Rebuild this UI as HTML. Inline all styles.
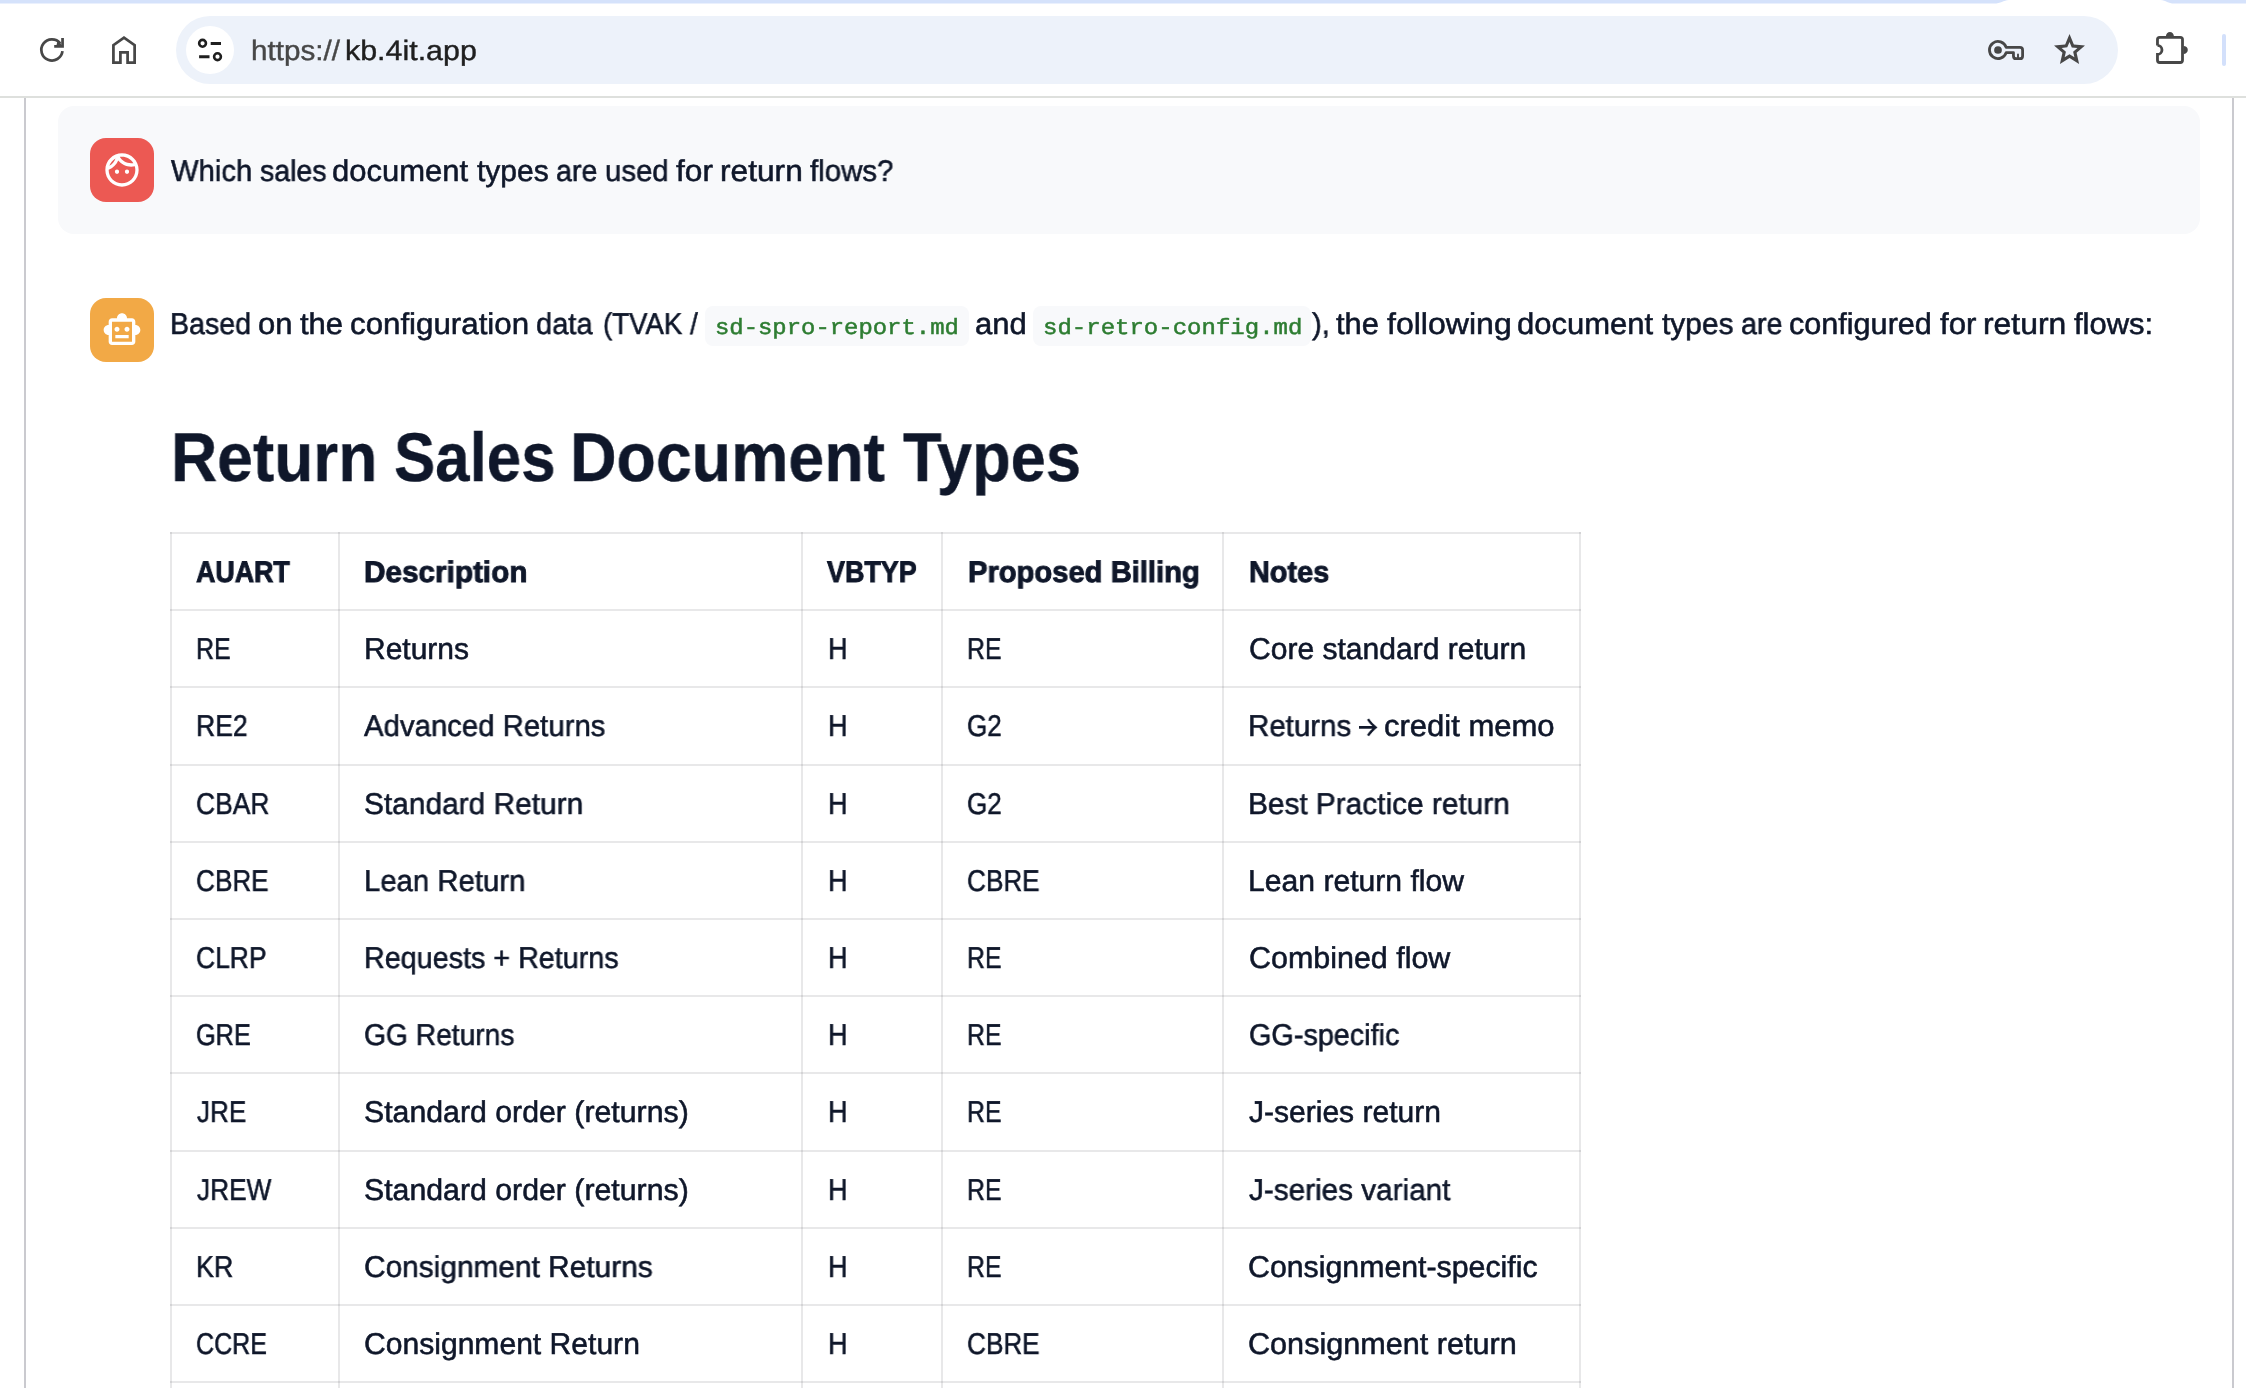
<!DOCTYPE html>
<html lang="en"><head><meta charset="utf-8"><title>kb.4it.app</title>
<style>
html,body{margin:0;padding:0;background:#fff}
body{position:relative;width:2246px;height:1388px;overflow:hidden;font-family:"Liberation Sans",sans-serif;color:#0f172a}
.a,.t,svg.i{position:absolute}
.t{white-space:nowrap;line-height:1;transform-origin:0 0;will-change:transform;text-rendering:geometricPrecision}
.t{-webkit-text-stroke:.55px currentColor}
.b{-webkit-text-stroke:.9px currentColor}
.h{-webkit-text-stroke:.4px currentColor}
.url{-webkit-text-stroke:.4px currentColor}
.code{-webkit-text-stroke:.5px currentColor}
.arrow{-webkit-text-stroke:0;display:block}
h1,p{margin:0;padding:0;font-size:inherit;font-weight:inherit}
.strip{left:0;top:0;width:2246px;height:5px}
.omni{left:176px;top:16px;width:1942px;height:68px;border-radius:34px;background:#edf2fa}
.site{left:186px;top:26px;width:48px;height:48px;border-radius:24px;background:#fff}
.tbline{left:0;top:96px;width:2246px;height:2px;background:#dee0dd}
.pill{left:2222px;top:34px;width:4px;height:32px;border-radius:2px;background:#d3e0fb}
.vline{top:98px;width:2px;height:1290px;background:#cacacf}
.ubox{left:58px;top:106px;width:2142px;height:128px;border-radius:16px;background:#f8f9fb}
.av{left:90px;width:64px;height:64px;border-radius:16px}
.av svg{position:absolute;left:12px;top:12px;width:40px;height:40px;fill:#fff}
.chip{top:306px;height:40px;border-radius:8px;background:#f8f9fb}
.gl{background:rgba(49,51,63,.115)}
</style></head>
<body>
<header>
<svg class="i strip" viewBox="0 0 2246 5"><path fill="#d5e2fb" d="M0 0H2009C2003 0.4 2001 3.6 1994 3.6H0ZM2160.5 0C2166.5 0.4 2167.5 3.6 2174.5 3.6H2246V0Z"/></svg>

<svg class="i" style="left:34px;top:30px;width:110px;height:40px" viewBox="34 30 110 40"><g fill="none" stroke="#474747" stroke-width="2.74" stroke-miterlimit="10"><path d="M60.2 43.3A10.6 10.6 0 1 0 62.47 51.2"/><path d="M54.2 46.35H62.55V38"/><path d="M113.42 62.55V45.2L124 37.68L134.63 45.2V62.55H127.6V52.4H120.4V62.55Z"/></g><path fill="#474747" d="M57.6 40.6L61.2 43.9V45.2H56.5Z"/></svg>

<div class="a omni"></div><div class="a site"></div>
<svg class="i" style="left:186px;top:26px;width:48px;height:48px" viewBox="186 26 48 48"><g fill="none" stroke="#1f1f1f" stroke-width="2.6"><circle cx="202.55" cy="43.3" r="3.4"/><circle cx="217.5" cy="56.7" r="3.4"/></g><g stroke="#1f1f1f" stroke-width="3"><path d="M210.7 43.5H221M199.1 56.7H209.5"/></g></svg>
<div class="addr"><span class="t url" style="left:250.54px;top:37.02px;font-size:28.0px;transform:scaleX(1.0590);color:#474747">https://</span>
<span class="t url" style="left:344.61px;top:37.02px;font-size:28.0px;transform:scaleX(1.0858);color:#1f1f1f">kb.4it.app</span></div>
<svg class="i" style="left:1984px;top:34px;width:46px;height:32px" viewBox="1984 34 46 32"><path fill="none" stroke="#474747" stroke-width="2.8" stroke-linejoin="round" d="M2006.16 47.45A8.55 8.55 0 1 0 2006.16 52.55H2013.45V55.9Q2013.45 58.67 2016.2 58.67H2019.85Q2022.6 58.67 2022.6 55.9V50.2Q2022.6 47.45 2019.85 47.45Z"/><circle cx="1998" cy="50" r="3.86" fill="#474747"/><path stroke="#474747" stroke-width="1.9" stroke-linecap="round" d="M2018 54.5V57.6"/></svg>
<svg class="i" style="left:2054.3px;top:33.9px;width:31.05px;height:29.9px" viewBox="2 3 20 19" preserveAspectRatio="none"><path fill="#474747" d="m8.85 17.825 3.15-1.9 3.15 1.925-.825-3.6 2.775-2.4-3.65-.325-1.45-3.4-1.45 3.375-3.65.325 2.775 2.425ZM5.825 22l1.625-7.025L2 10.25l7.2-.625L12 3l2.8 6.625 7.2.625-5.45 4.725L18.175 22 12 18.275Z"/></svg>
<svg class="i" style="left:2150px;top:28px;width:44px;height:40px" viewBox="2150 28 44 40"><path fill="none" stroke="#474747" stroke-width="2.8" d="M2157.47 45.4V39.5Q2157.47 37.3 2159.67 37.3H2180.3Q2182.5 37.3 2182.5 39.5V60.3Q2182.5 62.5 2180.3 62.5H2159.67Q2157.47 62.5 2157.47 60.3V54.4A4.5 4.5 0 0 0 2157.47 45.4"/><path fill="#474747" d="M2165.9 36.3A4 4.3 0 0 1 2173.9 36.3ZM2183.5 45.9A4.3 4 0 0 1 2183.5 53.9Z"/></svg>
<div class="a pill"></div>
<div class="a tbline"></div>
</header>
<main>
<div class="a vline" style="left:24px"></div><div class="a vline" style="left:2232px"></div>
<section class="msg user">
<div class="a ubox"></div>
<div class="a av" style="top:138px;background:#ec5953"><svg viewBox="0 0 24 24"><path d="M10.25 13c0 .69-.56 1.250-1.250 1.250S7.750 13.690 7.750 13s.56-1.250 1.250-1.250 1.250.56 1.250 1.250zM15 11.750c-.69 0-1.250.56-1.250 1.250s.56 1.250 1.250 1.250 1.250-.56 1.250-1.250-.56-1.250-1.250-1.250zm7 .25c0 5.520-4.480 10-10 10S2 17.520 2 12 6.480 2 12 2s10 4.480 10 10zM10.660 4.120C12.060 6.440 14.600 8 17.500 8c.46 0 .91-.05 1.340-.12C17.440 5.560 14.900 4 12 4c-.46 0-.91.05-1.340.12zM4.420 9.470c1.710-.97 3.030-2.550 3.660-4.440C6.370 6 5.050 7.580 4.420 9.470zM20 12c0-.78-.12-1.530-.33-2.240-.7.15-1.420.24-2.170.24-3.130 0-5.920-1.440-7.760-3.690C8.690 8.870 6.600 10.880 4 11.860c.1.040 0 .09 0 .14 0 4.410 3.590 8 8 8s8-3.590 8-8z"/></svg></div>
<p><span class="t" style="left:170.90px;top:157.02px;font-size:30.0px;transform:scaleX(0.9744)">Which</span>
<span class="t" style="left:259.70px;top:157.02px;font-size:30.0px;transform:scaleX(0.9507)">sales</span>
<span class="t" style="left:332.27px;top:157.02px;font-size:30.0px;transform:scaleX(1.0328)">document</span>
<span class="t" style="left:477.00px;top:157.02px;font-size:30.0px;transform:scaleX(1.0000)">types</span>
<span class="t" style="left:556.35px;top:157.02px;font-size:30.0px;transform:scaleX(0.9524)">are</span>
<span class="t" style="left:605.32px;top:157.02px;font-size:30.0px;transform:scaleX(0.9790)">used</span>
<span class="t" style="left:676.20px;top:157.02px;font-size:30.0px;transform:scaleX(1.0543)">for</span>
<span class="t" style="left:719.59px;top:157.02px;font-size:30.0px;transform:scaleX(1.0560)">return</span>
<span class="t" style="left:809.80px;top:157.02px;font-size:30.0px;transform:scaleX(0.9821)">flows?</span></p>
</section>
<section class="msg bot">
<div class="a av" style="top:298px;background:#f2a946"><svg viewBox="0 0 24 24"><path d="M20 9V7c0-1.100-.9-2-2-2h-3c0-1.660-1.340-3-3-3S9 3.340 9 5H6c-1.100 0-2 .9-2 2v2c-1.660 0-3 1.340-3 3s1.340 3 3 3v4c0 1.100.9 2 2 2h12c1.100 0 2-.9 2-2v-4c1.660 0 3-1.340 3-3s-1.340-3-3-3zm-2 10H6V7h12v12zm-9-6c-.83 0-1.500-.67-1.500-1.500S8.170 10 9 10s1.500.67 1.500 1.500S9.830 13 9 13zm7.500-1.500c0 .83-.67 1.500-1.500 1.500s-1.500-.67-1.500-1.500.67-1.500 1.500-1.500 1.500.67 1.500 1.500zM8 15h8v2H8v-2z"/></svg></div>
<div class="a chip" style="left:705px;width:264px"></div><div class="a chip" style="left:1032.7px;width:278.4px"></div>
<p><span class="t" style="left:170.20px;top:310.02px;font-size:30.0px;transform:scaleX(0.9512)">Based</span>
<span class="t" style="left:258.37px;top:310.02px;font-size:30.0px;transform:scaleX(1.0323)">on</span>
<span class="t" style="left:299.80px;top:310.02px;font-size:30.0px;transform:scaleX(1.0341)">the</span>
<span class="t" style="left:350.06px;top:310.02px;font-size:30.0px;transform:scaleX(1.0426)">configuration</span>
<span class="t" style="left:535.93px;top:310.02px;font-size:30.0px;transform:scaleX(0.9690)">data</span>
<span class="t" style="left:603.08px;top:310.02px;font-size:30.0px;transform:scaleX(0.9216)">(TVAK /</span>
<span class="t code" style="left:714.92px;top:318.02px;font-size:22.2px;transform:scaleX(1.0772);font-family:'Liberation Mono', monospace;color:#2e7d32">sd-spro-report.md</span>
<span class="t" style="left:974.97px;top:310.02px;font-size:30.0px;transform:scaleX(1.0340)">and</span>
<span class="t code" style="left:1042.82px;top:318.02px;font-size:22.2px;transform:scaleX(1.0823);font-family:'Liberation Mono', monospace;color:#2e7d32">sd-retro-config.md</span>
<span class="t" style="left:1312.20px;top:310.02px;font-size:30.0px;transform:scaleX(0.9750)">),</span>
<span class="t" style="left:1335.80px;top:310.02px;font-size:30.0px;transform:scaleX(1.0293)">the</span>
<span class="t" style="left:1386.90px;top:310.02px;font-size:30.0px;transform:scaleX(1.0687)">following</span>
<span class="t" style="left:1516.77px;top:310.02px;font-size:30.0px;transform:scaleX(1.0336)">document</span>
<span class="t" style="left:1662.00px;top:310.02px;font-size:30.0px;transform:scaleX(0.9972)">types</span>
<span class="t" style="left:1740.75px;top:310.02px;font-size:30.0px;transform:scaleX(0.9548)">are</span>
<span class="t" style="left:1789.28px;top:310.02px;font-size:30.0px;transform:scaleX(1.0196)">configured</span>
<span class="t" style="left:1940.30px;top:310.02px;font-size:30.0px;transform:scaleX(1.0400)">for</span>
<span class="t" style="left:1983.27px;top:310.02px;font-size:30.0px;transform:scaleX(1.0627)">return</span>
<span class="t" style="left:2073.90px;top:310.02px;font-size:30.0px;transform:scaleX(1.0324)">flows:</span></p>
<h1><span class="t h" style="left:171.49px;top:423.02px;font-size:69.0px;transform:scaleX(0.9279);font-weight:700">Return</span>
<span class="t h" style="left:393.91px;top:423.02px;font-size:69.0px;transform:scaleX(0.8955);font-weight:700">Sales</span>
<span class="t h" style="left:570.06px;top:423.02px;font-size:69.0px;transform:scaleX(0.9339);font-weight:700">Document</span>
<span class="t h" style="left:903.00px;top:423.02px;font-size:69.0px;transform:scaleX(0.9156);font-weight:700">Types</span></h1>
<div class="table">
<div class="a gl" style="left:170px;top:532px;width:2px;height:856px"></div><div class="a gl" style="left:338px;top:532px;width:2px;height:856px"></div><div class="a gl" style="left:801px;top:532px;width:2px;height:856px"></div><div class="a gl" style="left:941px;top:532px;width:2px;height:856px"></div><div class="a gl" style="left:1222px;top:532px;width:2px;height:856px"></div><div class="a gl" style="left:1579px;top:532px;width:2px;height:856px"></div><div class="a gl" style="left:170px;top:532.00px;width:1411px;height:2px"></div><div class="a gl" style="left:170px;top:609.20px;width:1411px;height:2px"></div><div class="a gl" style="left:170px;top:686.40px;width:1411px;height:2px"></div><div class="a gl" style="left:170px;top:763.60px;width:1411px;height:2px"></div><div class="a gl" style="left:170px;top:840.80px;width:1411px;height:2px"></div><div class="a gl" style="left:170px;top:918.00px;width:1411px;height:2px"></div><div class="a gl" style="left:170px;top:995.20px;width:1411px;height:2px"></div><div class="a gl" style="left:170px;top:1072.40px;width:1411px;height:2px"></div><div class="a gl" style="left:170px;top:1149.60px;width:1411px;height:2px"></div><div class="a gl" style="left:170px;top:1226.80px;width:1411px;height:2px"></div><div class="a gl" style="left:170px;top:1304.00px;width:1411px;height:2px"></div><div class="a gl" style="left:170px;top:1381.20px;width:1411px;height:2px"></div>
<div class="tr th"><span class="t b" style="left:195.50px;top:558.02px;font-size:29.9px;transform:scaleX(0.8971);font-weight:700">AUART</span>
<span class="t b" style="left:364.01px;top:558.02px;font-size:29.9px;transform:scaleX(0.9938);font-weight:700">Description</span>
<span class="t b" style="left:826.90px;top:558.02px;font-size:29.9px;transform:scaleX(0.9000);font-weight:700">VBTYP</span>
<span class="t b" style="left:967.82px;top:558.02px;font-size:29.9px;transform:scaleX(0.9757);font-weight:700">Proposed Billing</span>
<span class="t b" style="left:1249.03px;top:558.02px;font-size:29.9px;transform:scaleX(0.9654);font-weight:700">Notes</span></div>
<div class="tr"><span class="t" style="left:195.84px;top:635.02px;font-size:30.0px;transform:scaleX(0.8308)">RE</span> <span class="t" style="left:363.70px;top:635.02px;font-size:30.0px;transform:scaleX(0.9980)">Returns</span> <span class="t" style="left:827.90px;top:635.02px;font-size:30.0px;transform:scaleX(0.9000)">H</span> <span class="t" style="left:966.95px;top:635.02px;font-size:30.0px;transform:scaleX(0.8256)">RE</span> <span class="t" style="left:1248.70px;top:635.02px;font-size:30.0px;transform:scaleX(1.0018)">Core standard return</span></div>
<div class="tr"><span class="t" style="left:195.73px;top:712.02px;font-size:30.0px;transform:scaleX(0.8836)">RE2</span> <span class="t" style="left:364.00px;top:712.02px;font-size:30.0px;transform:scaleX(0.9780)">Advanced Returns</span> <span class="t" style="left:827.90px;top:712.02px;font-size:30.0px;transform:scaleX(0.9000)">H</span> <span class="t" style="left:967.23px;top:712.02px;font-size:30.0px;transform:scaleX(0.8684)">G2</span> <span class="t" style="left:1248.43px;top:712.02px;font-size:30.0px;transform:scaleX(0.9833)">Returns</span> <span class="t arrow" style="left:1359.00px;top:707.02px;font-size:38.4px;transform:scaleX(0.867);width:22.1px;overflow:hidden;text-indent:-15.89px;font-family:'Noto Sans CJK SC', 'DejaVu Sans', sans-serif">→</span> <span class="t" style="left:1384.37px;top:712.02px;font-size:30.0px;transform:scaleX(1.0337)">credit memo</span></div>
<div class="tr"><span class="t" style="left:195.82px;top:790.02px;font-size:30.0px;transform:scaleX(0.8802)">CBAR</span> <span class="t" style="left:364.00px;top:790.02px;font-size:30.0px;transform:scaleX(0.9959)">Standard Return</span> <span class="t" style="left:827.90px;top:790.02px;font-size:30.0px;transform:scaleX(0.9000)">H</span> <span class="t" style="left:967.23px;top:790.02px;font-size:30.0px;transform:scaleX(0.8684)">G2</span> <span class="t" style="left:1248.41px;top:790.02px;font-size:30.0px;transform:scaleX(0.9938)">Best Practice return</span></div>
<div class="tr"><span class="t" style="left:195.83px;top:867.02px;font-size:30.0px;transform:scaleX(0.8716)">CBRE</span> <span class="t" style="left:363.75px;top:867.02px;font-size:30.0px;transform:scaleX(0.9772)">Lean Return</span> <span class="t" style="left:827.90px;top:867.02px;font-size:30.0px;transform:scaleX(0.9000)">H</span> <span class="t" style="left:967.23px;top:867.02px;font-size:30.0px;transform:scaleX(0.8716)">CBRE</span> <span class="t" style="left:1248.39px;top:867.02px;font-size:30.0px;transform:scaleX(1.0042)">Lean return flow</span></div>
<div class="tr"><span class="t" style="left:195.82px;top:944.02px;font-size:30.0px;transform:scaleX(0.8821)">CLRP</span> <span class="t" style="left:363.79px;top:944.02px;font-size:30.0px;transform:scaleX(0.9574)">Requests + Returns</span> <span class="t" style="left:827.90px;top:944.02px;font-size:30.0px;transform:scaleX(0.9000)">H</span> <span class="t" style="left:966.95px;top:944.02px;font-size:30.0px;transform:scaleX(0.8256)">RE</span> <span class="t" style="left:1248.69px;top:944.02px;font-size:30.0px;transform:scaleX(1.0146)">Combined flow</span></div>
<div class="tr"><span class="t" style="left:195.86px;top:1021.02px;font-size:30.0px;transform:scaleX(0.8429)">GRE</span> <span class="t" style="left:364.06px;top:1021.02px;font-size:30.0px;transform:scaleX(0.9405)">GG Returns</span> <span class="t" style="left:827.90px;top:1021.02px;font-size:30.0px;transform:scaleX(0.9000)">H</span> <span class="t" style="left:966.95px;top:1021.02px;font-size:30.0px;transform:scaleX(0.8256)">RE</span> <span class="t" style="left:1248.74px;top:1021.02px;font-size:30.0px;transform:scaleX(0.9600)">GG-specific</span></div>
<div class="tr"><span class="t" style="left:196.70px;top:1098.02px;font-size:30.0px;transform:scaleX(0.8679)">JRE</span> <span class="t" style="left:363.99px;top:1098.02px;font-size:30.0px;transform:scaleX(1.0091)">Standard order (returns)</span> <span class="t" style="left:827.90px;top:1098.02px;font-size:30.0px;transform:scaleX(0.9000)">H</span> <span class="t" style="left:966.95px;top:1098.02px;font-size:30.0px;transform:scaleX(0.8256)">RE</span> <span class="t" style="left:1249.00px;top:1098.02px;font-size:30.0px;transform:scaleX(1.0011)">J-series return</span></div>
<div class="tr"><span class="t" style="left:196.70px;top:1176.02px;font-size:30.0px;transform:scaleX(0.8741)">JREW</span> <span class="t" style="left:363.99px;top:1176.02px;font-size:30.0px;transform:scaleX(1.0091)">Standard order (returns)</span> <span class="t" style="left:827.90px;top:1176.02px;font-size:30.0px;transform:scaleX(0.9000)">H</span> <span class="t" style="left:966.95px;top:1176.02px;font-size:30.0px;transform:scaleX(0.8256)">RE</span> <span class="t" style="left:1249.00px;top:1176.02px;font-size:30.0px;transform:scaleX(0.9907)">J-series variant</span></div>
<div class="tr"><span class="t" style="left:195.71px;top:1253.02px;font-size:30.0px;transform:scaleX(0.8949)">KR</span> <span class="t" style="left:364.01px;top:1253.02px;font-size:30.0px;transform:scaleX(0.9948)">Consignment Returns</span> <span class="t" style="left:827.90px;top:1253.02px;font-size:30.0px;transform:scaleX(0.9000)">H</span> <span class="t" style="left:966.95px;top:1253.02px;font-size:30.0px;transform:scaleX(0.8256)">RE</span> <span class="t" style="left:1247.99px;top:1253.02px;font-size:30.0px;transform:scaleX(1.0098)">Consignment-specific</span></div>
<div class="tr"><span class="t" style="left:195.87px;top:1330.02px;font-size:30.0px;transform:scaleX(0.8349)">CCRE</span> <span class="t" style="left:364.00px;top:1330.02px;font-size:30.0px;transform:scaleX(1.0026)">Consignment Return</span> <span class="t" style="left:827.90px;top:1330.02px;font-size:30.0px;transform:scaleX(0.9000)">H</span> <span class="t" style="left:967.23px;top:1330.02px;font-size:30.0px;transform:scaleX(0.8716)">CBRE</span> <span class="t" style="left:1247.98px;top:1330.02px;font-size:30.0px;transform:scaleX(1.0199)">Consignment return</span></div>
</div>
</section>
</main>
</body></html>
